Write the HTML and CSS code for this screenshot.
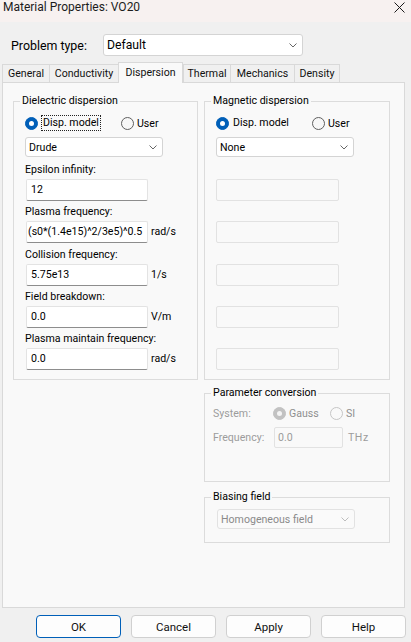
FILE: index.html
```html
<!DOCTYPE html>
<html>
<head>
<meta charset="utf-8">
<title>Material Properties: VO20</title>
<link rel="stylesheet" href="styles.css">
</head>
<body>
<div class="titlebar">
  <span class="title">Material Properties: VO20</span>
  <svg class="close" viewBox="0 0 11 11"><path d="M0.5 0.5 L10.5 10.5 M10.5 0.5 L0.5 10.5" stroke="#1b1b1b" stroke-width="1" fill="none"/></svg>
</div>

<div class="problem-row">
  <span class="problem-label">Problem type:</span>
  <div class="select select-problem"><span>Default</span><svg class="chev" viewBox="0 0 8 5"><polyline points="0.5,0.5 4,4 7.5,0.5" fill="none" stroke="#666" stroke-width="1"/></svg></div>
</div>

<div class="tabs">
  <div class="tab tab-general">General</div>
  <div class="tab tab-cond">Conductivity</div>
  <div class="tab tab-disp tab-active">Dispersion</div>
  <div class="tab tab-thermal">Thermal</div>
  <div class="tab tab-mech">Mechanics</div>
  <div class="tab tab-density">Density</div>
</div>

<div class="panel">
  <div class="col-left">
    <div class="group">
      <div class="group-title">Dielectric dispersion</div>
      <div class="group-body">
        <div class="radio-row">
          <span class="radio-item radio-item-main"><span class="radio radio-on"></span><span class="focus">Disp. model</span></span>
          <span class="radio-item"><span class="radio"></span><span>User</span></span>
        </div>
        <div class="select select-field"><span>Drude</span><svg class="chev" viewBox="0 0 8 5"><polyline points="0.5,0.5 4,4 7.5,0.5" fill="none" stroke="#666" stroke-width="1"/></svg></div>
        <div class="field field-first">
          <div class="field-label">Epsilon infinity:</div>
          <div class="input-row"><div class="input">12</div></div>
        </div>
        <div class="field">
          <div class="field-label">Plasma frequency:</div>
          <div class="input-row"><div class="input input-tight">(s0*(1.4e15)^2/3e5)^0.5</div><span class="unit">rad/s</span></div>
        </div>
        <div class="field">
          <div class="field-label">Collision frequency:</div>
          <div class="input-row"><div class="input">5.75e13</div><span class="unit">1/s</span></div>
        </div>
        <div class="field">
          <div class="field-label">Field breakdown:</div>
          <div class="input-row"><div class="input">0.0</div><span class="unit">V/m</span></div>
        </div>
        <div class="field">
          <div class="field-label">Plasma maintain frequency:</div>
          <div class="input-row"><div class="input">0.0</div><span class="unit">rad/s</span></div>
        </div>
      </div>
    </div>
  </div>

  <div class="col-right">
    <div class="group">
      <div class="group-title">Magnetic dispersion</div>
      <div class="group-body">
        <div class="radio-row">
          <span class="radio-item radio-item-main"><span class="radio radio-on"></span><span class="plain">Disp. model</span></span>
          <span class="radio-item"><span class="radio"></span><span>User</span></span>
        </div>
        <div class="select select-field"><span>None</span><svg class="chev" viewBox="0 0 8 5"><polyline points="0.5,0.5 4,4 7.5,0.5" fill="none" stroke="#666" stroke-width="1"/></svg></div>
        <div class="field field-first"><div class="field-label"></div><div class="input-row"><div class="input input-disabled"></div></div></div>
        <div class="field"><div class="field-label"></div><div class="input-row"><div class="input input-disabled"></div></div></div>
        <div class="field"><div class="field-label"></div><div class="input-row"><div class="input input-disabled"></div></div></div>
        <div class="field"><div class="field-label"></div><div class="input-row"><div class="input input-disabled"></div></div></div>
        <div class="field"><div class="field-label"></div><div class="input-row"><div class="input input-disabled"></div></div></div>
      </div>
    </div>

    <div class="group group-param">
      <div class="group-title">Parameter conversion</div>
      <div class="group-body param-body">
        <div class="sys-row">
          <span class="sys-label">System:</span>
          <span class="radio-item radio-item-gauss"><span class="radio radio-dis-on"></span><span>Gauss</span></span>
          <span class="radio-item"><span class="radio radio-dis"></span><span>SI</span></span>
        </div>
        <div class="freq-row">
          <span class="freq-label">Frequency:</span>
          <div class="input input-freq">0.0</div>
          <span class="unit unit-dis">THz</span>
        </div>
      </div>
    </div>

    <div class="group group-bias">
      <div class="group-title">Biasing field</div>
      <div class="group-body bias-body">
        <div class="select select-field select-disabled"><span>Homogeneous field</span><svg class="chev" viewBox="0 0 8 5"><polyline points="0.5,0.5 4,4 7.5,0.5" fill="none" stroke="#bdbdbd" stroke-width="1"/></svg></div>
      </div>
    </div>
  </div>
</div>

<div class="buttons">
  <div class="btn btn-default">OK</div>
  <div class="btn">Cancel</div>
  <div class="btn">Apply</div>
  <div class="btn">Help</div>
</div>
</body>
</html>
```

FILE: styles.css
```css
body {
  margin: 0;
  width: 411px;
  height: 642px;
  overflow: hidden;
  background: #f0f0f0;
  font-family: Roboto, "Liberation Sans", sans-serif;
  font-size: 10.6px;
  color: #000;
}

.titlebar {
  height: 22px;
  background: #f7f1f0;
  display: flex;
  justify-content: space-between;
  align-items: flex-start;
}

.title {
  margin-left: 3px;
  font-size: 12px;
  line-height: 14px;
  color: #1c1c1c;
}

.close {
  width: 11px;
  height: 11px;
  margin: 2px 6px 0 0;
}

.problem-row {
  display: flex;
  align-items: center;
  height: 22px;
  margin-top: 12px;
  padding-left: 11px;
}

.problem-label {
  width: 92px;
  font-size: 12.4px;
}

.select {
  display: flex;
  align-items: center;
  justify-content: space-between;
  box-sizing: border-box;
  background: #fff;
  border: 1px solid #d4d4d4;
  border-radius: 3px;
  padding: 0 5px 0 3px;
}

.select-problem {
  width: 200px;
  height: 22px;
  font-size: 12.2px;
}

.select-field {
  width: 138px;
  height: 20px;
  margin-top: 6px;
}

.chev {
  width: 8px;
  height: 5px;
  flex: none;
}

.select-disabled {
  background: #fafafa;
  border-color: #e2e2e2;
  color: #8a8a8a;
}

.tabs {
  display: flex;
  align-items: flex-end;
  height: 20px;
  margin-top: 6px;
  padding-left: 2px;
}

.tab {
  box-sizing: border-box;
  height: 18px;
  border: 1px solid #d9d9d9;
  border-bottom: none;
  background: #f0f0f0;
  display: flex;
  align-items: center;
  justify-content: center;
  margin-left: -1px;
  color: #111;
}

.tab-general { width: 48px; margin-left: 0; }
.tab-cond { width: 70px; }
.tab-disp { width: 65px; }
.tab-thermal { width: 48px; margin-left: 0; }
.tab-mech { width: 65px; }
.tab-density { width: 46px; }

.tab-active {
  height: 21px;
  margin-bottom: -1px;
  background: #f9f9f9;
  position: relative;
  z-index: 1;
  padding-bottom: 1px;
}

.panel {
  box-sizing: border-box;
  height: 526px;
  margin: 0 6px 0 2px;
  border: 1px solid #d9d9d9;
  background: #f9f9f9;
  padding: 18px 0 0 10px;
  display: flex;
  align-items: flex-start;
  gap: 6px;
}

.col-left {
  width: 185px;
}

.col-right {
  width: 186px;
  display: flex;
  flex-direction: column;
}

.group {
  border: 1px solid #dcdcdc;
}

.group-title {
  width: fit-content;
  margin: -8px 0 0 6px;
  padding: 0 2px;
  background: #f9f9f9;
  line-height: 14px;
}

.group-body {
  padding: 7px 10px 9px 11px;
}

.radio-row {
  display: flex;
  align-items: center;
  height: 16px;
}

.radio-item {
  display: flex;
  align-items: center;
  gap: 3px;
}

.radio-item-main {
  width: 96px;
}

.radio {
  flex: none;
  box-sizing: border-box;
  width: 13px;
  height: 13px;
  border-radius: 50%;
  border: 1px solid #5f5f5f;
  background: #f7f7f7;
}

.radio-on {
  background: #005fb8;
  border-color: #005fb8;
  display: flex;
  align-items: center;
  justify-content: center;
}

.radio-on::after {
  content: "";
  width: 5px;
  height: 5px;
  border-radius: 50%;
  background: #fff;
}

.radio-dis-on {
  background: #c2c2c2;
  border-color: #c2c2c2;
  display: flex;
  align-items: center;
  justify-content: center;
}

.radio-dis-on::after {
  content: "";
  width: 5px;
  height: 5px;
  border-radius: 50%;
  background: #f4f4f4;
}

.radio-dis {
  border-color: #c6c6c6;
  background: #f9f9f9;
}

.focus {
  border: 1px dotted #222;
  padding: 0 1px;
  line-height: 14px;
}

.plain {
  padding: 0 1px;
  line-height: 16px;
}

.field {
  margin-top: 4.25px;
}

.field-first {
  margin-top: 6px;
}

.field-label {
  height: 14px;
  line-height: 14px;
}

.input-row {
  display: flex;
  align-items: center;
  gap: 3px;
  margin-top: 2px;
}

.input {
  box-sizing: border-box;
  width: 122px;
  height: 22px;
  margin-left: 1px;
  background: #fff;
  border: 1px solid #e3e3e3;
  border-bottom-color: #8d8d8d;
  border-radius: 2px;
  padding: 0 4px;
  line-height: 20px;
  white-space: nowrap;
  overflow: hidden;
}

.input-tight {
  padding-left: 1px;
}

.input-disabled {
  width: 123px;
  margin-left: 0;
  background: #f9f9f9;
  border-color: #e2e2e2;
}

.unit {
  line-height: 14px;
}

.group-param {
  margin-top: 13px;
}

.param-body {
  padding: 6px 8px 33px 8px;
  color: #9c9c9c;
}

.sys-row {
  display: flex;
  align-items: center;
  height: 14px;
}

.sys-label {
  width: 60px;
}

.radio-item-gauss {
  width: 57px;
}

.sys-row .radio-item {
  color: #8f8f8f;
}

.freq-row {
  display: flex;
  align-items: center;
  margin-top: 7px;
}

.freq-label {
  width: 61px;
}

.input-freq {
  width: 69px;
  height: 21px;
  margin-left: 0;
  background: #f9f9f9;
  border-color: #e2e2e2;
  padding: 0 3px;
  line-height: 19px;
  color: #9c9c9c;
}

.unit-dis {
  margin-left: 5px;
  letter-spacing: 0.5px;
}

.group-bias {
  margin-top: 15px;
}

.bias-body {
  padding: 5px 10px 13px 12px;
}

.bias-body .select-field {
  margin-top: 0;
}

.buttons {
  display: flex;
  justify-content: flex-end;
  gap: 10px;
  margin-top: 7px;
  padding-right: 5px;
}

.btn {
  box-sizing: border-box;
  width: 85px;
  height: 23px;
  border: 1px solid #d0d0d0;
  border-radius: 4px;
  background: #fdfdfd;
  display: flex;
  align-items: center;
  justify-content: center;
  font-size: 11.5px;
  color: #111;
}

.btn-default {
  border-color: #005fb8;
}
```
